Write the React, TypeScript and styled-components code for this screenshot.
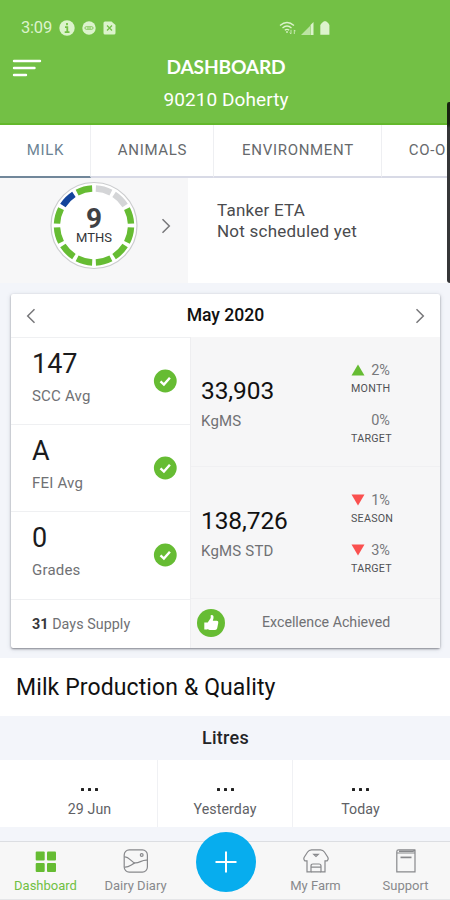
import React from "react";
import styled, { createGlobalStyle } from "styled-components";

const GREEN = "#66bc33";

const GlobalStyle = createGlobalStyle`
  * { box-sizing: border-box; }
  body { margin: 0; background: #fff; font-family: Roboto, sans-serif; color: #111; }
`;

const Screen = styled.div`
  position: relative;
  display: flex;
  flex-direction: column;
  width: 450px;
  height: 900px;
  overflow: hidden;
  background: #f3f5fa;
`;

const Header = styled.header`
  height: 125px;
  flex: none;
  background: #73c045;
  border-bottom: 2px solid #63b82b;
  color: #fff;
`;

const StatusBar = styled.div`
  display: flex;
  justify-content: space-between;
  height: 55px;
  padding: 18px 120px 0 21px;
  color: #dcf3cc;
`;

const StatusGroup = styled.div<{ $gap: number }>`
  display: flex;
  align-items: center;
  gap: ${(p) => p.$gap}px;
  height: 20px;
`;

const Clock = styled.span`
  width: 31px;
  font-size: 16.5px;
  line-height: 20px;
  letter-spacing: -0.2px;
`;

const TitleBar = styled.div`
  display: grid;
  grid-template-columns: 52px 1fr 50px;
  text-align: center;
`;

const MenuIcon = styled.svg`
  margin: 4px 0 0 12px;
`;

const Title = styled.h1`
  margin: 0;
  font: 700 19.2px/24px Lato, sans-serif;
  letter-spacing: -0.2px;
`;

const Subtitle = styled.div`
  margin-top: 9px;
  font-size: 19px;
  line-height: 24px;
  letter-spacing: 0.08px;
`;

const Tabs = styled.nav`
  display: flex;
  flex: none;
  height: 53px;
  background: #fff;
`;

const Tab = styled.div<{ $width: number; $active?: boolean }>`
  flex: none;
  width: ${(p) => p.$width}px;
  padding-left: 1px;
  border-right: 1px solid #eeeff2;
  border-bottom: 2px solid ${(p) => (p.$active ? "#71879a" : "#d8dae6")};
  color: ${(p) => (p.$active ? "#6c8394" : "#66696c")};
  font-size: 15px;
  line-height: 51px;
  letter-spacing: 0.7px;
  text-align: center;
  white-space: nowrap;
`;

const Overview = styled.section`
  display: flex;
  flex: none;
  height: 105px;
`;

const Season = styled.div`
  display: flex;
  align-items: flex-start;
  width: 188px;
  padding: 3px 0 0 49px;
  background: #f7f7f8;
`;

const Chevron = styled.svg`
  display: block;
  fill: none;
  stroke: #77777a;
  stroke-width: 1.5;
`;

const SeasonArrow = styled.div`
  margin: 37px 0 0 22px;
`;

const Dial = styled.div`
  display: grid;
  width: 90px;
  height: 90px;
`;

const DialRing = styled.svg`
  grid-area: 1 / 1;
`;

const DialText = styled.div`
  grid-area: 1 / 1;
  padding-top: 25px;
  text-align: center;
  color: #333538;
`;

const DialValue = styled.div`
  font-size: 28px;
  font-weight: 700;
  line-height: 25px;
  color: #3f4144;
`;

const DialUnit = styled.div`
  font-size: 13px;
  line-height: 13px;
`;

const Tanker = styled.div`
  flex: 1;
  padding: 22px 0 0 29px;
  background: #fff;
  color: #4a4b4e;
  font-size: 17px;
  line-height: 20.5px;
  letter-spacing: 0.23px;
`;

const MonthCard = styled.section`
  flex: none;
  width: 429px;
  height: 354px;
  margin: 11px 0 10px 11px;
  border-radius: 2px;
  background: #fff;
  box-shadow: 0 1px 2px rgba(50, 50, 60, 0.5), 0 1px 5px rgba(60, 70, 90, 0.18);
`;

const MonthBar = styled.div`
  display: flex;
  align-items: center;
  justify-content: space-between;
  height: 43px;
  padding: 0 15px;
  font-size: 17.6px;
  font-weight: 500;
`;

const MonthName = styled.span`
  margin-bottom: 2px;
`;

const CardBody = styled.div`
  display: flex;
  height: 311px;
`;

const QualityColumn = styled.div`
  width: 180px;
  border-right: 1px solid #eeeef0;
`;

const QualityRow = styled.div<{ $height: number }>`
  display: flex;
  justify-content: space-between;
  height: ${(p) => p.$height}px;
  padding: 10px 13px 0 21px;
  border-top: 1px solid #eff0f2;
`;

const Figure = styled.div`
  color: #1b1b1d;
  font-size: 27px;
  line-height: 32px;
`;

const Caption = styled.div`
  margin-top: 6px;
  color: #707174;
  font-size: 15px;
  line-height: 20px;
  letter-spacing: 0.2px;
`;

const Check = styled.svg`
  margin-top: 21px;
`;

const Supply = styled.div`
  height: 49px;
  padding-left: 21px;
  border-top: 1px solid #eff0f2;
  color: #707174;
  font-size: 14.3px;
  line-height: 48px;
  letter-spacing: 0.06px;
  b { color: #37383b; }
`;

const ProductionColumn = styled.div`
  flex: 1;
  background: #f6f6f7;
`;

const ProductionRow = styled.div<{ $height: number }>`
  display: flex;
  justify-content: space-between;
  height: ${(p) => p.$height}px;
  padding: 23px 49px 0 10px;
  border-bottom: 1px solid #f0f0f2;
`;

const Total = styled.div`
  margin-top: 15px;
  color: #111;
  font-size: 24.5px;
  line-height: 32px;
  letter-spacing: -0.1px;
`;

const TotalUnit = styled(Caption)`
  margin-top: 4px;
`;

const Changes = styled.div`
  width: 40px;
`;

const Change = styled.div`
  display: flex;
  justify-content: space-between;
  align-items: center;
  width: 39px;
  height: 20px;
  color: #77787b;
  font-size: 14.5px;
`;

const ChangeLabel = styled.div`
  height: 18px;
  margin-bottom: 12px;
  color: #505155;
  font-size: 10.7px;
  line-height: 18px;
  letter-spacing: 0.25px;
  white-space: nowrap;
`;

const Award = styled.div`
  display: flex;
  align-items: center;
  gap: 37px;
  height: 49px;
  padding: 0 0 1px 6px;
  color: #707174;
  font-size: 14.2px;
`;

const AwardText = styled.span`
  margin-bottom: 2px;
`;

const SectionTitle = styled.h2`
  flex: none;
  height: 58px;
  margin: 0;
  padding-left: 16px;
  background: #fff;
  font-size: 23px;
  font-weight: 400;
  line-height: 59px;
  letter-spacing: 0.11px;
`;

const Band = styled.div`
  flex: none;
  height: 44px;
  text-align: center;
  font-size: 18px;
  font-weight: 500;
  line-height: 44px;
  letter-spacing: 0.3px;
  color: #222326;
  padding-left: 1px;
`;

const Days = styled.div`
  display: grid;
  flex: none;
  grid-template-columns: 158px 135px 157px;
  height: 67px;
  margin-bottom: 14px;
  background: #fff;
`;

const Day = styled.div<{ $left?: number; $right?: number }>`
  padding: 24px ${(p) => p.$right ?? 0}px 0 ${(p) => p.$left ?? 0}px;
  border-right: 1px solid #f0f1f4;
  text-align: center;
  color: #606165;
  font-size: 14.2px;
  line-height: 17px;
  letter-spacing: 0.1px;
  &:last-child { border-right: 0; }
`;

const Dots = styled.div`
  display: flex;
  justify-content: center;
  gap: 4px;
  height: 4px;
  margin: 4px 0 9px;
  i { width: 3px; height: 3px; background: #222; border-radius: 0.5px; }
`;

const BottomNav = styled.nav`
  display: grid;
  flex: none;
  grid-template-columns: repeat(5, 90px);
  height: 59px;
  border-top: 1px solid #dcdee2;
  border-bottom: 1px solid #e5e6e8;
  background: #f7f7f7;
`;

const NavItem = styled.div<{ $active?: boolean }>`
  display: flex;
  flex-direction: column;
  align-items: center;
  padding: 5px 0 0 1px;
  color: ${(p) => (p.$active ? "#70bf43" : "#88898c")};
  font-size: 13px;
  line-height: 18px;
  svg { flex: none; height: 28px; margin-bottom: 2px; }
`;

const AddButton = styled.div`
  display: flex;
  align-items: center;
  justify-content: center;
  width: 60px;
  height: 60px;
  margin: -10px 0 0 16px;
  border-radius: 50%;
  background: #07adee;
`;

const PhoneEdge = styled.div`
  position: absolute;
  top: 102px;
  right: 0;
  width: 3px;
  height: 181px;
  border-radius: 3px 0 0 4px;
  background: linear-gradient(#17220f 0, #17220f 22px, #353638 26px);
`;

const MONTH_COLORS = ["#d4d5d7", "#d4d5d7", GREEN, GREEN, GREEN, GREEN, GREEN, GREEN, GREEN, GREEN, "#13449b", GREEN];

const SeasonDial = () => (
  <Dial>
    <DialRing width="90" height="90" viewBox="0 0 90 90">
      <circle cx="45" cy="44.5" r="43" fill="#fff" stroke="#cbccce" strokeWidth="1.2" />
      {MONTH_COLORS.map((color, i) => (
        <path key={i} d="M37.2 8.3 A37 37 0 0 1 52.8 8.3" fill="none" stroke={color} strokeWidth="6.4"
          transform={`rotate(${15 + i * 30} 45 44.5)`} />
      ))}
    </DialRing>
    <DialText>
      <DialValue>9</DialValue>
      <DialUnit>MTHS</DialUnit>
    </DialText>
  </Dial>
);

const Arrow = ({ left = false }: { left?: boolean }) => (
  <Chevron width="10" height="16" viewBox="0 0 10 16">
    <path d={left ? "M8.5 1.2 L1.7 8 L8.5 14.8" : "M1.5 1.2 L8.3 8 L1.5 14.8"} />
  </Chevron>
);

const CheckMark = () => (
  <Check width="24" height="24" viewBox="0 0 24 24">
    <circle cx="12.3" cy="12" r="11.4" fill={GREEN} />
    <path d="M7.5 12.4 L10.9 15.6 L16.9 8.7" fill="none" stroke="#fff" strokeWidth="2.4" />
  </Check>
);

const Triangle = ({ down = false }: { down?: boolean }) => (
  <svg width="14" height="12" viewBox="0 0 14 12">
    <path d={down ? "M0.5 0.5H13.5L7 11.5Z" : "M0.5 11.5H13.5L7 0.5Z"} fill={down ? "#fa504f" : GREEN} />
  </svg>
);

const QUALITY = [
  { value: "147", label: "SCC Avg", height: 87 },
  { value: "A", label: "FEI Avg", height: 87 },
  { value: "0", label: "Grades", height: 88 },
];

export default function App() {
  return (
    <Screen>
      <GlobalStyle />
      <Header>
        <StatusBar>
          <StatusGroup $gap={7}>
            <Clock>3:09</Clock>
            <svg width="16" height="16" viewBox="0 0 16 16">
              <circle cx="8" cy="8" r="7.7" fill="currentColor" />
              <path d="M8 3v2.2M6 7.2h2.3v5M5.7 12.2h4.8" stroke="#73c045" strokeWidth="1.8" fill="none" />
            </svg>
            <svg width="14" height="14" viewBox="0 0 14 14">
              <circle cx="7" cy="7" r="6.7" fill="currentColor" />
              <path d="M4.2 5.7h5.6a1.2 1.2 0 0 1 0 2.6H4.2a1.2 1.2 0 0 1 0-2.6zM5 7h4" stroke="#73c045" strokeWidth=".8" fill="none" />
            </svg>
            <svg width="14" height="14" viewBox="0 0 14 14">
              <path d="M2 .5h6.5L12.5 4v8q0 1.5-1.5 1.5H2q-1.5 0-1.5-1.5V2Q.5.5 2 .5Z" fill="currentColor" />
              <path d="M4 4.5l5 5M9 4.5l-5 5" stroke="#73c045" strokeWidth="1.3" />
            </svg>
          </StatusGroup>
          <StatusGroup $gap={5}>
            <svg width="17" height="15" viewBox="0 0 17 15" fill="none" stroke="currentColor" strokeWidth="1.3">
              <path d="M1 4.6Q8 -1.5 15 4.6M3.5 7Q8 3 12.5 7M5.8 9.2Q8 7.5 10.2 9.2" />
              <path d="M8 10v2" />
              <path d="M12 8.8v4m-1.4-1.3 1.4 1.4M15.3 13v-4m1.3 1.3-1.3-1.4" strokeWidth=".8" />
            </svg>
            <svg width="14" height="14" viewBox="0 0 14 14" fill="currentColor">
              <path d="M9 5v9H0z" opacity=".7" />
              <path d="M9.5 4 12.5 1v13h-3z" />
            </svg>
            <svg width="10" height="14" viewBox="0 0 10 14" fill="currentColor">
              <path d="M1.8 2 4 .3h2L8.2 2 9.4 4v9.7H.3V4z" />
            </svg>
          </StatusGroup>
        </StatusBar>
        <TitleBar>
          <MenuIcon width="30" height="18" viewBox="0 0 30 18">
            <path d="M2 2h26M2 9h20.5M2 16h12" stroke="#fff" strokeWidth="2.4" strokeLinecap="round" />
          </MenuIcon>
          <div>
            <Title>DASHBOARD</Title>
            <Subtitle>90210 Doherty</Subtitle>
          </div>
        </TitleBar>
      </Header>

      <Tabs>
        <Tab $width={91} $active>MILK</Tab>
        <Tab $width={123}>ANIMALS</Tab>
        <Tab $width={168}>ENVIRONMENT</Tab>
        <Tab $width={101}>CO-OP</Tab>
      </Tabs>

      <Overview>
        <Season>
          <SeasonDial />
          <SeasonArrow><Arrow /></SeasonArrow>
        </Season>
        <Tanker>
          <div>Tanker ETA</div>
          <div>Not scheduled yet</div>
        </Tanker>
      </Overview>

      <MonthCard>
        <MonthBar>
          <Arrow left />
          <MonthName>May 2020</MonthName>
          <Arrow />
        </MonthBar>
        <CardBody>
          <QualityColumn>
            {QUALITY.map((row) => (
              <QualityRow key={row.label} $height={row.height}>
                <div>
                  <Figure>{row.value}</Figure>
                  <Caption>{row.label}</Caption>
                </div>
                <CheckMark />
              </QualityRow>
            ))}
            <Supply><b>31</b> Days Supply</Supply>
          </QualityColumn>
          <ProductionColumn>
            <ProductionRow $height={130}>
              <div>
                <Total>33,903</Total>
                <TotalUnit>KgMS</TotalUnit>
              </div>
              <Changes>
                <Change><Triangle /><span>2%</span></Change>
                <ChangeLabel>MONTH</ChangeLabel>
                <Change><span /><span>0%</span></Change>
                <ChangeLabel>TARGET</ChangeLabel>
              </Changes>
            </ProductionRow>
            <ProductionRow $height={132}>
              <div>
                <Total>138,726</Total>
                <TotalUnit>KgMS STD</TotalUnit>
              </div>
              <Changes>
                <Change><Triangle down /><span>1%</span></Change>
                <ChangeLabel>SEASON</ChangeLabel>
                <Change><Triangle down /><span>3%</span></Change>
                <ChangeLabel>TARGET</ChangeLabel>
              </Changes>
            </ProductionRow>
            <Award>
              <svg width="28" height="28" viewBox="0 0 28 28">
                <circle cx="14" cy="14" r="14" fill={GREEN} />
                <path d="M7.3 13.6h3.4l3-4.5V6.3q1.7-1 2.7.6.6 1.9-.6 4.9h3.9q1.9.2 1.6 1.9l-1.1 5.6q-.4 1.7-2.1 1.7h-5.5l-2.2-1v.6H7.3z" fill="#fff" />
              </svg>
              <AwardText>Excellence Achieved</AwardText>
            </Award>
          </ProductionColumn>
        </CardBody>
      </MonthCard>

      <SectionTitle>Milk Production &amp; Quality</SectionTitle>
      <Band>Litres</Band>
      <Days>
        <Day $left={22}><Dots><i /><i /><i /></Dots>29 Jun</Day>
        <Day><Dots><i /><i /><i /></Dots>Yesterday</Day>
        <Day $right={22}><Dots><i /><i /><i /></Dots>Today</Day>
      </Days>

      <BottomNav>
        <NavItem $active>
          <svg width="22" viewBox="0 0 22 28" fill={GREEN}>
            <rect x="0.7" y="4.5" width="9" height="9" rx="1" /><rect x="12" y="4.5" width="9" height="9" rx="1" />
            <rect x="0.7" y="16" width="9" height="9" rx="1" /><rect x="12" y="16" width="9" height="9" rx="1" />
          </svg>
          Dashboard
        </NavItem>
        <NavItem>
          <svg width="26" viewBox="0 0 26 28" fill="none" stroke="#88898c" strokeWidth="1.2">
            <rect x="1.2" y="2.9" width="23.2" height="22.2" rx="5" />
            <path d="M1.2 10C6 9 8 15.5 12.2 15.9S19 12.5 24.4 13.2M1.5 20C6 20.5 8 17.5 12.2 15.9" />
            <circle cx="18.7" cy="8" r="1.4" />
          </svg>
          Dairy Diary
        </NavItem>
        <AddButton>
          <svg width="22" height="22" viewBox="0 0 22 22"><path d="M11 0.5v21M0.5 11h21" stroke="#fff" strokeWidth="2" /></svg>
        </AddButton>
        <NavItem>
          <svg width="26" viewBox="0 0 26 28" fill="none" stroke="#88898c" strokeWidth="1.2">
            <path d="M4 13.8H1.8Q.2 12.4 1.2 10.2L4.6 5Q6 3 8.5 2.9h9q2.5.1 3.9 2.1l3.4 5.2q1 2.2-.6 3.6H22v11.1h-4V19q0-2-2-2h-6q-2 0-2 2v5.9H4z" />
            <path d="M8 24.9h10M8 20.2h10M10.8 7.4h4.4L13 9.4z" />
          </svg>
          My Farm
        </NavItem>
        <NavItem>
          <svg width="22" viewBox="0 0 22 28" fill="none" stroke="#88898c" strokeWidth="1.2">
            <path d="M20 6H1.8v18.8H20zM1.8 6V4.7q0-1.8 1.8-1.8H20M4 4.4h14l2-1.2V6" />
            <path d="M5.5 10.4h11" strokeWidth="1.7" />
          </svg>
          Support
        </NavItem>
      </BottomNav>
      <PhoneEdge />
    </Screen>
  );
}
